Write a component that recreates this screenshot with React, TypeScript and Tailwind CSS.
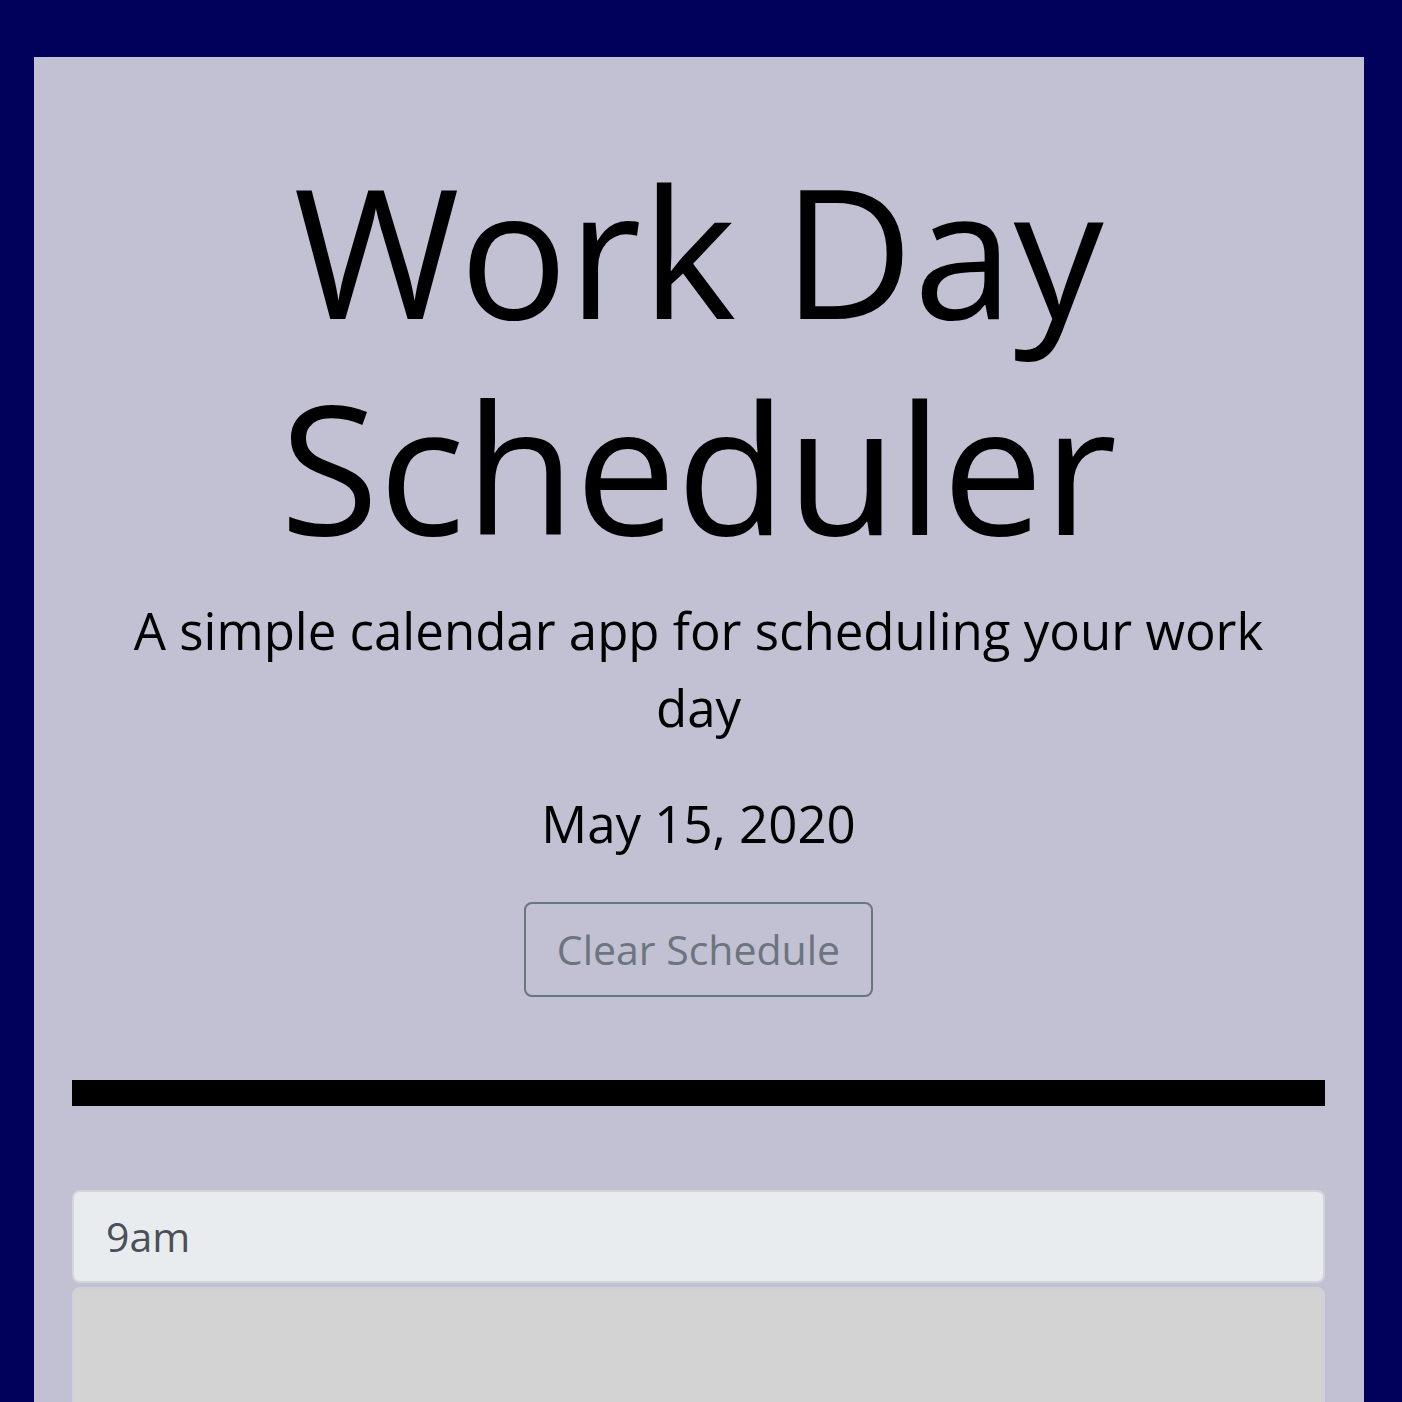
import React from "react";

export default function App() {
  return (
    <div
      className="min-h-screen bg-[#01015c] pl-[34px] pr-[38px] pt-[57px]"
      style={{ fontFamily: '"Open Sans", "Liberation Sans", sans-serif' }}
    >
      <div className="min-h-[1400px] bg-[#c2c1d3] pl-[38px] pr-[39px] pt-[85px]">
        <header className="text-center">
          <h1 className="text-[180px] font-normal leading-[216px] text-black">
            Work Day Scheduler
          </h1>
          <p className="mx-auto mt-[18px] max-w-[1180px] text-[51px] leading-[77px] text-black">
            A simple calendar app for scheduling your work day
          </p>
          <p className="mt-[39px] text-[51px] leading-[77px] text-black">May 15, 2020</p>
          <button className="mt-[40px] rounded-[8px] border-2 border-[#6c757d] px-[31px] py-[15px] text-[41px] leading-[61px] text-[#6c757d]">
            Clear Schedule
          </button>
        </header>
        <div className="mt-[83px] h-[26px] bg-black" />
        <div className="mt-[84px] flex flex-col gap-[4px]">
          <div className="flex h-[93px] items-center rounded-[8px] border-2 border-[#d2d5dc] bg-[#e9ecef] px-[32px] text-[41px] text-[#495057]">
            9am
          </div>
          <textarea className="h-[300px] w-full resize-none rounded-t-[8px] border-2 border-[#cfd0d8] bg-[#d3d3d3]" />
        </div>
      </div>
    </div>
  );
}
